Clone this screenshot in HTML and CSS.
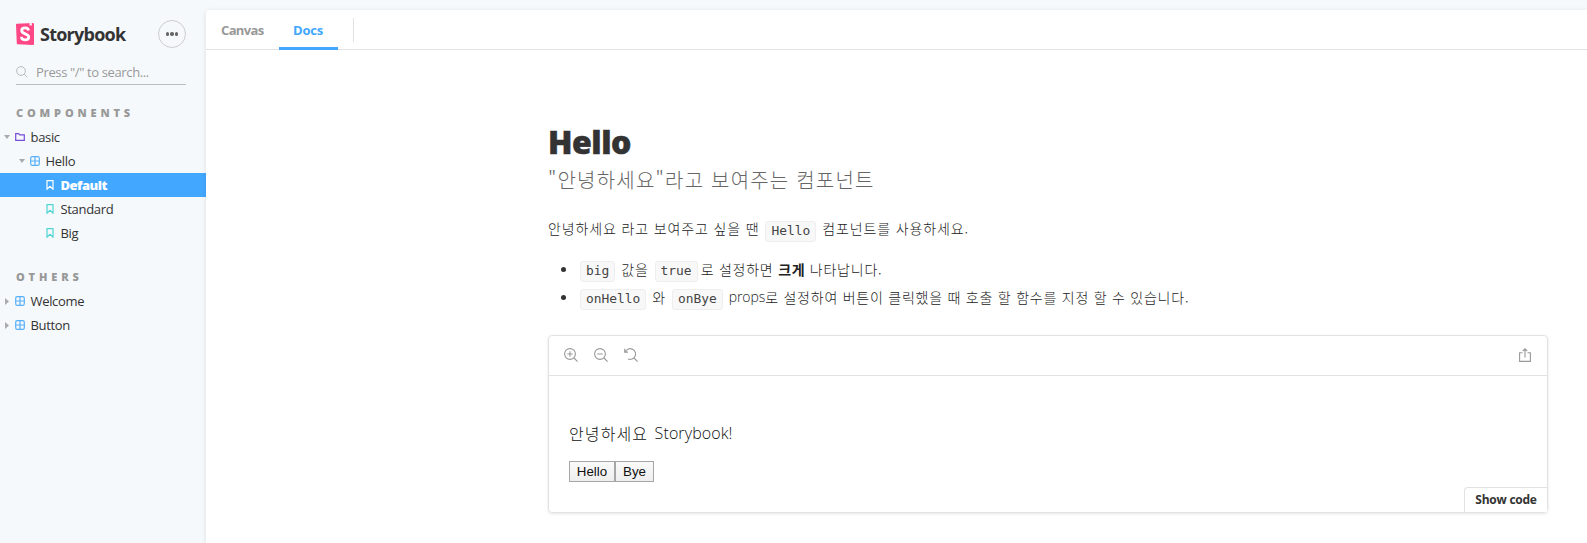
FILE: index.html
```html
<!DOCTYPE html>
<html lang="ko">
<head>
<meta charset="utf-8">
<title>Storybook</title>
<link rel="stylesheet" href="styles.css">
</head>
<body>
<svg class="defs" aria-hidden="true">
  <symbol id="component" viewBox="0 0 10 10"><rect x=".7" y=".7" width="8.6" height="8.6" rx="1.6"/><path d="M5 .7v8.6M.7 5h8.6"/></symbol>
  <symbol id="bookmark" viewBox="0 0 10 10"><path d="M2 .6h6v8.6L5 6.4 2 9.2z"/></symbol>
  <symbol id="folder" viewBox="0 0 10 10"><path d="M.7 1.7h3l1 1.1h4.6v5.6H.7z"/></symbol>
</svg>
<div class="app">
  <aside class="sidebar">
    <header class="brand">
      <svg class="brand-mark" viewBox="0 0 18 22"><path fill="#ff4785" d="M0 1.6Q0 .9.8.8L16.9 0Q18 0 18 1v20q0 1-1 1L1.7 21.3Q.8 21.200.8 20.400z"/><path fill="#fff" d="M13.500.2l2.200-.2.1 2.900-1-.8-1.100.8z"/><path class="brand-s" d="M12.500 7.500C12.300 5.500 11 4.900 9.100 4.900S5.700 5.900 5.700 7.600c0 3.900 7 2.700 7 6.400 0 1.900-1.500 2.900-3.600 2.900s-3.700-.9-3.600-3.200"/></svg>
      <span class="brand-name">Storybook</span>
      <button class="more" aria-label="Menu"><i></i><i></i><i></i></button>
    </header>
    <div class="search">
      <svg class="search-icon" viewBox="0 0 12 12"><circle cx="5" cy="5" r="4.400"/><path d="M8.200 8.200l3.200 3.200"/></svg>
      <span class="search-text">Press "/" to search...</span>
    </div>
    <h2 class="group components">COMPONENTS</h2>
    <nav class="tree">
      <a class="row"><i class="arrow open"></i><svg class="icon folder"><use href="#folder"/></svg><span>basic</span></a>
      <a class="row depth1"><i class="arrow open"></i><svg class="icon component"><use href="#component"/></svg><span>Hello</span></a>
      <a class="row depth2 selected"><svg class="icon leaf"><use href="#bookmark"/></svg><span>Default</span></a>
      <a class="row depth2"><svg class="icon leaf"><use href="#bookmark"/></svg><span>Standard</span></a>
      <a class="row depth2"><svg class="icon leaf"><use href="#bookmark"/></svg><span>Big</span></a>
    </nav>
    <h2 class="group others">OTHERS</h2>
    <nav class="tree">
      <a class="row"><i class="arrow"></i><svg class="icon component"><use href="#component"/></svg><span>Welcome</span></a>
      <a class="row"><i class="arrow"></i><svg class="icon component"><use href="#component"/></svg><span>Button</span></a>
    </nav>
  </aside>
  <main class="panel">
    <div class="tabs">
      <a class="tab canvas"><span>Canvas</span></a>
      <a class="tab docs active"><span>Docs</span></a>
      <i class="divider"></i>
    </div>
    <article class="content">
      <h1 class="title">Hello</h1>
      <p class="subtitle">"안녕하세요"라고 보여주는 컴포넌트</p>
      <p class="text"><span>안녕하세요 라고 보여주고 싶을 땐</span><code>Hello</code><span class="after">컴포넌트를 사용하세요.</span></p>
      <ul class="list">
        <li><code class="first">big</code><span class="after">값을</span><code>true</code><span class="joined">로 설정하면 <b>크게</b> 나타납니다.</span></li>
        <li><code class="first">onHello</code><span class="after">와</span><code>onBye</code><span class="after latin">props</span><span>로 설정하여 버튼이 클릭했을 때 호출 할 함수를 지정 할 수 있습니다.</span></li>
      </ul>
      <section class="preview">
        <div class="tools">
          <svg viewBox="0 0 14 14"><circle cx="6" cy="6" r="5.400"/><path d="M10 10l3.600 3.600M6 3.300v5.400M3.300 6h5.400"/></svg>
          <svg viewBox="0 0 14 14"><circle cx="6" cy="6" r="5.400"/><path d="M10 10l3.600 3.600M3.300 6h5.400"/></svg>
          <svg viewBox="0 0 14 14"><path d="M1.300 3.600A5.400 5.400 0 1 1 4 11M10 10l3.600 3.600M.7.8v3.300h3.300"/></svg>
          <svg class="share" viewBox="0 0 14 14"><path d="M4.500 4.700H1.600v8.700h10.800V4.700H9.500M7 9.500V.9M4.800 3L7 .8 9.200 3"/></svg>
        </div>
        <div class="story">
          <p class="greeting"><span>안녕하세요</span><span class="greeting-name">Storybook!</span></p>
          <div class="buttons"><button class="hello">Hello</button><button class="bye">Bye</button></div>
        </div>
        <button class="show-code">Show code</button>
      </section>
    </article>
  </main>
</div>
</body>
</html>
```
FILE: styles.css
```css
* { box-sizing: border-box; }
body { margin: 0; height: 543px; overflow: hidden; background: #f6f9fc; color: #333; font: 14px/20px "Open Sans", "Noto Sans CJK KR", sans-serif; }
h1, h2, p, ul { margin: 0; padding: 0; }
i { display: block; }
span, code { white-space: nowrap; }
.defs { position: absolute; width: 0; height: 0; }
.app { display: flex; height: 543px; padding-top: 10px; }

.sidebar { width: 206px; flex: none; padding-top: 10px; }
.brand { display: flex; align-items: center; height: 28px; margin: 0 20px 0 16px; }
.brand-mark { width: 18px; height: 22px; }
.brand-s { fill: none; stroke: #fff; stroke-width: 2.800; }
.brand-name { margin-left: 6px; font: 700 18px/24px "Open Sans", sans-serif; letter-spacing: -.75px; }
.more { display: flex; align-items: center; justify-content: center; gap: 1px; width: 28px; height: 28px; margin-left: auto; padding: 0; border: 1px solid #ccc; border-radius: 50%; background: none; }
.more i { width: 3.500px; height: 3.500px; border-radius: 50%; background: #666; }
.search { display: flex; align-items: center; height: 25px; margin: 12px 20px 0 16px; border-bottom: 1px solid #bcbfc1; color: #999; }
.search-icon { width: 12px; height: 12px; fill: none; stroke: #b8babb; }
.search-text { margin-left: 8px; font-size: 13px; letter-spacing: -.37px; }
.group { height: 24px; padding-left: 16px; color: #999; font-size: 11px; line-height: 24px; font-weight: 800; letter-spacing: 3.850px; }
.components { margin-top: 16px; }
.others { margin-top: 20px; }
.row { display: flex; align-items: center; height: 24px; padding-left: 4px; font-size: 13px; letter-spacing: -.32px; }
.depth1 { padding-left: 19px; }
.depth2 { padding-left: 45px; }
.selected { background: #42a7ff; color: #fff; font-weight: 800; letter-spacing: -.5px; }
.arrow { width: 6px; height: 6px; margin-right: 5px; }
.arrow::before { content: ""; display: block; width: 4px; height: 7px; margin-left: 1px; background: #a8aaab; clip-path: polygon(0 0, 100% 50%, 0 100%); }
.arrow.open::before { width: 6px; height: 4px; margin: 1px 0 0; clip-path: polygon(0 0, 100% 0, 50% 100%); }
.icon { width: 10px; height: 10px; margin-right: 5.500px; fill: none; stroke-width: 1.200; }
.folder { stroke: #774cd9; }
.component { stroke: #56b0f8; }
.leaf { stroke: #4fd4d0; }
.selected .leaf { stroke: #fff; }

.panel { flex: 1; min-width: 0; background: #fff; border-top-left-radius: 4px; box-shadow: 0 1px 5px rgba(0, 0, 0, .1); }
.tabs { display: flex; height: 40px; border-bottom: 1px solid #e2e2e2; color: #999; font-size: 13px; font-weight: 700; }
.tab { height: 40px; padding-top: 10px; border-bottom: 3px solid transparent; }
.canvas { width: 73px; padding-left: 15px; letter-spacing: -.65px; }
.docs { width: 59px; padding-left: 14px; letter-spacing: -.2px; }
.active { color: #42a7ff; border-color: #42a7ff; }
.divider { width: 1px; height: 24px; margin: 8px 0 0 15px; background: #e2e2e2; }

.content { width: 1000px; margin-left: 342px; padding-top: 74px; }
.title { height: 36px; font-size: 32px; line-height: 35px; font-weight: 800; letter-spacing: -.5px; -webkit-text-stroke: .5px #333; }
.subtitle { height: 24px; margin-top: 8px; color: #666; font: 300 20px/24px "Noto Sans CJK KR", sans-serif; letter-spacing: 1.200px; }
.text, .list li { display: flex; align-items: center; height: 24px; color: #222; font: 300 14px/24px "Noto Sans CJK KR", sans-serif; letter-spacing: .76px; }
.text { margin-top: 24px; letter-spacing: .86px; }
code { position: relative; top: 3px; height: 21px; margin-left: 6px; padding: 0 5px; border: 1px solid #eee; border-radius: 3px; background: #f8f8f8; color: #444; font: 12.900px/18px "DejaVu Sans Mono", monospace; letter-spacing: 0; }
.list { margin-top: 15px; list-style: none; }
.list li { height: 28px; padding-left: 32px; }
.list li::before { content: ""; width: 5px; height: 5px; margin: 0 14px 0 -19px; border-radius: 50%; background: #333; }
.list code { top: 2px; }
.list .first { margin-left: 0; }
b { font-weight: 700; letter-spacing: .6px; }
.after { margin-left: 6px; }
.joined { margin-left: 3px; }
.latin { font-family: "Open Sans", sans-serif; letter-spacing: -.1px; }

.preview { position: relative; height: 178px; margin-top: 24px; border: 1px solid #e2e2e2; border-radius: 4px; box-shadow: 0 1px 3px rgba(0, 0, 0, .1); }
.tools { display: flex; align-items: center; gap: 16px; height: 40px; padding: 0 15.500px 1px 15px; border-bottom: 1px solid #e2e2e2; }
.tools svg { width: 14px; height: 14px; fill: none; stroke: #999; stroke-width: 1.100; }
.tools .share { margin-left: auto; }
.story { padding: 45px 20px 0; color: #111; }
.greeting { display: flex; height: 24px; font: 300 16px/24px "Noto Sans CJK KR", sans-serif; letter-spacing: 1.100px; }
.greeting-name { margin-left: 6.500px; font-family: "Open Sans", sans-serif; letter-spacing: .1px; }
.buttons { display: flex; margin-top: 16px; }
.buttons button { height: 21px; padding: 0; border: 1px solid #a6a6a6; background: linear-gradient(#fafafa, #eee); color: #111; font: 13.333px/17px "Liberation Sans", sans-serif; }
.hello { width: 46px; }
.bye { width: 39px; }
.show-code { position: absolute; right: 0; bottom: 0; width: 83px; height: 25px; padding: 0; border: solid #e2e2e2; border-width: 1px 0 0 1px; border-radius: 4px 0 0; background: #fff; color: #333; font: 700 12px/16px "Open Sans", sans-serif; letter-spacing: -.25px; }
```
